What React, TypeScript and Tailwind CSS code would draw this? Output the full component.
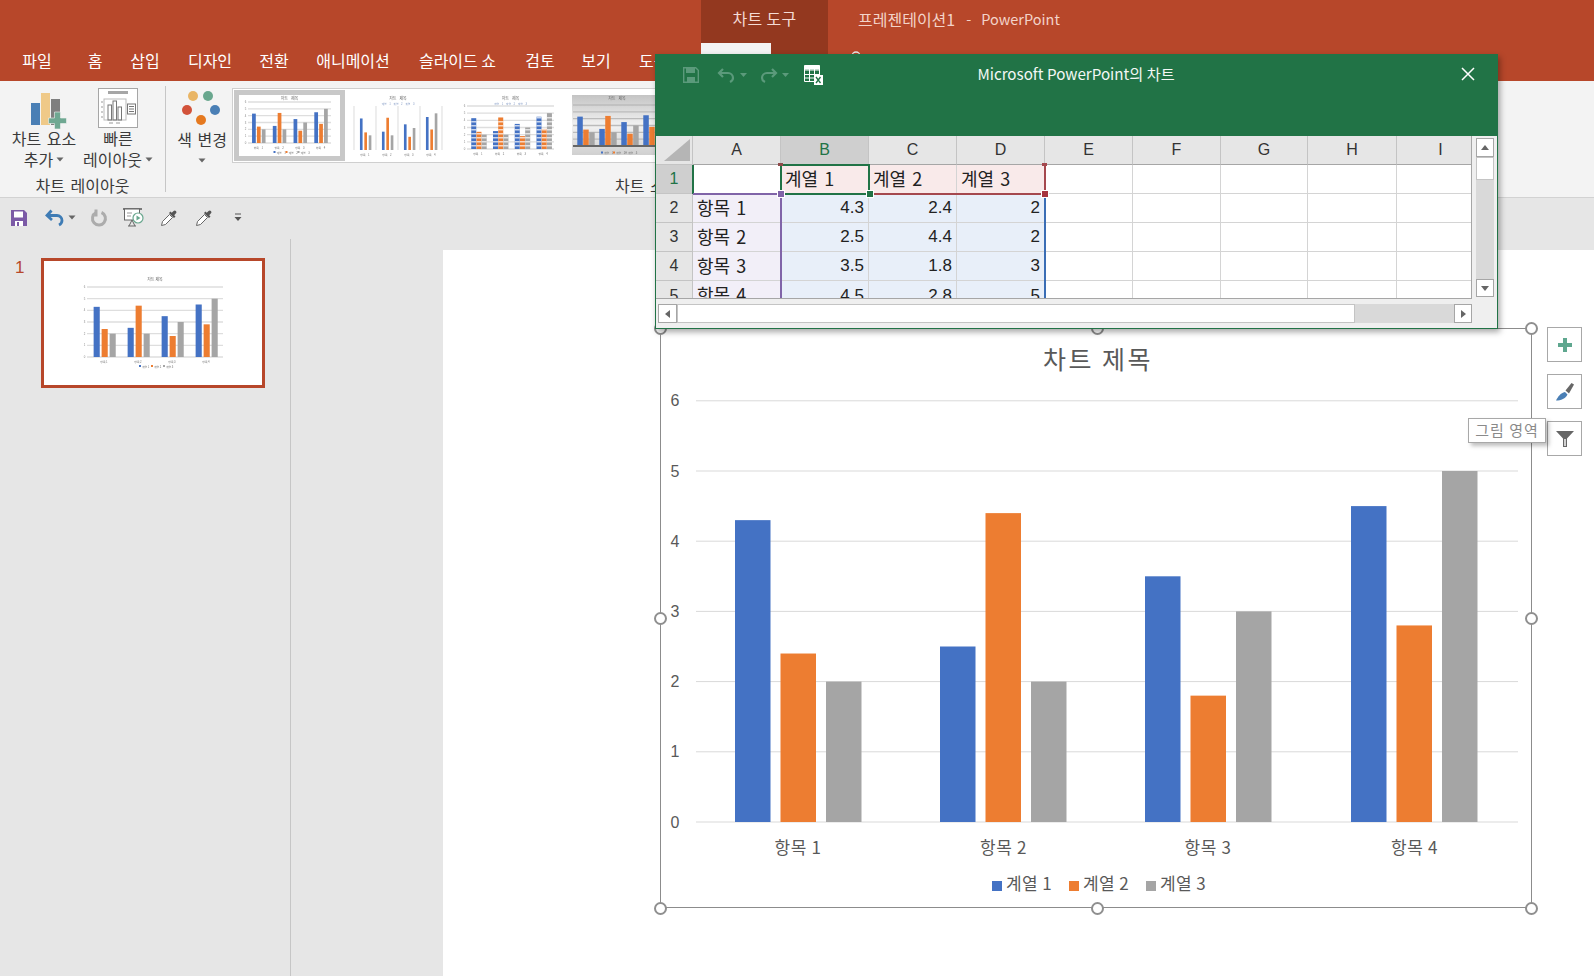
import React from 'react';

const FONT = '"Noto Sans CJK KR", "Liberation Sans", sans-serif';
const NUM = '"Liberation Sans", "Noto Sans CJK KR", sans-serif';

const series = [
  { color: '#4472c4', values: [4.3, 2.5, 3.5, 4.5] },
  { color: '#ed7d31', values: [2.4, 4.4, 1.8, 2.8] },
  { color: '#a5a5a5', values: [2, 2, 3, 5] },
];
const cats = ['항목 1', '항목 2', '항목 3', '항목 4'];

const tabs = [
  ['파일', 'w-[58px] text-center'],
  ['홈', 'w-[58px] text-center'],
  ['삽입', 'w-[42px] text-center'],
  ['디자인', 'w-[88px] text-center'],
  ['전환', 'w-[40px] text-center'],
  ['애니메이션', 'w-[118px] text-center'],
  ['슬라이드 쇼', 'w-[91px] text-center'],
  ['검토', 'w-[74px] text-center'],
  ['보기', 'w-[38px] text-center'],
  ['도움말', 'w-[40px] pl-[24px] text-left overflow-hidden'],
];

function Caret({ className = '' }: { className?: string }) {
  return (
    <svg width="8" height="5" viewBox="0 0 8 5" className={className}>
      <path d="M.5.5h7L4 4.500z" fill="#666" />
    </svg>
  );
}

const barShape = {
  plain: { bw: 0.18, step: 0.235, start: 0.195 },
  lines: { bw: 0.12, step: 0.2, start: 0.27 },
  striped: { bw: 0.23, step: 0.24, start: 0.195 },
  gray: { bw: 0.25, step: 0.27, start: 0.195 },
};

// 슬라이드 썸네일과 차트 스타일 갤러리의 작은 미리보기
function MiniChart({
  w,
  h,
  x0,
  x1,
  y0,
  y1,
  variant = 'plain',
}: {
  w: number;
  h: number;
  x0: number;
  x1: number;
  y0: number;
  y1: number;
  variant?: 'plain' | 'lines' | 'striped' | 'gray';
}) {
  const group = (x1 - x0) / 4;
  const unit = (y1 - y0) / 6;
  const shape = barShape[variant];
  const cx = (x0 + x1) / 2;
  const legendY = variant === 'gray' ? y1 + 5.5 : y1 + 8;
  return (
    <svg width={w} height={h} viewBox={`0 0 ${w} ${h}`} className="block blur-[0.6px]">
      <defs>
        <linearGradient id="grayBg" x1="0" y1="0" x2="0" y2="1">
          <stop offset="0" stopColor="#c4c4c4" />
          <stop offset="0.5" stopColor="#f2f2f2" />
          <stop offset="1" stopColor="#d0d0d0" />
        </linearGradient>
      </defs>
      {variant === 'gray' && <rect width={w} height={h} fill="url(#grayBg)" />}
      <text x={cx} y={Math.max(4.5, y0 - 6)} fontSize="4" textAnchor="middle" fill="#666" fontFamily={FONT}>
        차트 제목
      </text>
      {(variant === 'lines' || variant === 'striped') && (
        <text x={cx} y={y0 - 1} fontSize="2.8" textAnchor="middle" fill="#8aa0c8" fontFamily={FONT}>
          계열 1 계열 2 계열 3
        </text>
      )}
      {variant !== 'lines' &&
        [0, 1, 2, 3, 4, 5, 6].map((i) => (
          <line key={i} x1={x0} x2={x1} y1={y1 - i * unit} y2={y1 - i * unit} stroke={variant === 'gray' ? '#bbb' : '#dedede'} strokeWidth="1.3" />
        ))}
      {variant === 'lines' &&
        [0, 1, 2, 3, 4].map((i) => <line key={i} x1={x0 + i * group} x2={x0 + i * group} y1={y0} y2={y1} stroke="#e2e2e2" strokeWidth="1.2" />)}
      {cats.map((c, g) => (
        <g key={c}>
          {series.map((s, i) => {
            const x = x0 + g * group + group * shape.start + i * group * shape.step;
            const bh = s.values[g] * unit;
            return (
              <g key={s.color}>
                <rect x={x} y={y1 - bh} width={group * shape.bw} height={bh} fill={s.color} />
                {variant === 'striped' &&
                  [1, 2, 3, 4, 5, 6, 7, 8, 9, 10].map((k) =>
                    k * 4 < bh ? <rect key={k} x={x} y={y1 - k * 4} width={group * shape.bw} height="1.5" fill="#fff" opacity="0.7" /> : null,
                  )}
              </g>
            );
          })}
          {variant === 'gray' ? null : (
            <text x={x0 + g * group + group / 2} y={y1 + 5.5} fontSize="2.8" textAnchor="middle" fill="#777" fontFamily={FONT}>
              {c}
            </text>
          )}
        </g>
      ))}
      {variant === 'gray' && <rect x={x0} y={y1 - 1} width={w} height="2" fill="#666" />}
      {(variant === 'plain' || variant === 'striped') &&
        [0, 1, 2, 3, 4, 5, 6].map((i) => (
          <text key={i} x={x0 - 2.5} y={y1 - i * unit + 1} fontSize="2.8" textAnchor="middle" fill="#888" fontFamily={NUM}>
            {i}
          </text>
        ))}
      {(variant === 'plain' || variant === 'gray') &&
        series.map((s, i) => (
          <g key={s.color}>
            <rect x={cx - 16 + i * 12} y={legendY} width="2" height="2" fill={s.color} />
            <text x={cx - 13 + i * 12} y={legendY + 2.5} fontSize="2.8" fill="#777" fontFamily={FONT}>
              계열 {i + 1}
            </text>
          </g>
        ))}
    </svg>
  );
}

function ChartElementIcon() {
  return (
    <svg width="36" height="40" viewBox="0 0 36 40">
      <rect x="0" y="14" width="9" height="22" fill="#4a7fb5" />
      <rect x="10" y="4" width="9" height="32" fill="#efc988" />
      <rect x="20" y="10" width="9" height="26" fill="#7f7f7f" />
      <path d="M23.5 23h6v6h6v5.500h-6v5.500h-6v-5.500h-6V29h6z" fill="#6fa892" stroke="#f3f3f3" strokeWidth="0.6" />
    </svg>
  );
}

function QuickLayoutIcon() {
  return (
    <svg width="40" height="40" viewBox="0 0 40 40">
      <rect x="0.5" y="0.5" width="39" height="39" fill="#fff" stroke="#a6a6a6" />
      <rect x="10" y="3" width="20" height="3" fill="#a6a6a6" />
      <rect x="6" y="11" width="22" height="21" fill="none" stroke="#bbb" />
      <rect x="10" y="17" width="3.5" height="15" fill="none" stroke="#777" />
      <rect x="15" y="13" width="3.5" height="19" fill="none" stroke="#777" />
      <rect x="20" y="19" width="3.5" height="13" fill="none" stroke="#777" />
      <rect x="29.5" y="16" width="8" height="10" fill="#fff" stroke="#777" />
      <path d="M31 18.5h5M31 21h5M31 23.5h5" stroke="#777" />
      <path d="M3 14h2M3 19h2M3 24h2M3 29h2M11 35h4M18 35h4" stroke="#999" />
    </svg>
  );
}

function ColorsIcon() {
  return (
    <svg width="40" height="36" viewBox="0 0 40 36">
      <circle cx="11" cy="6" r="5" fill="#e9b565" />
      <circle cx="26" cy="6" r="5" fill="#69a78e" />
      <circle cx="5" cy="20" r="5" fill="#d2523a" />
      <circle cx="33" cy="20" r="5" fill="#4a7fb5" />
      <circle cx="19" cy="30" r="5" fill="#e5791f" />
    </svg>
  );
}

function Dropper() {
  return (
    <svg width="18" height="18" viewBox="0 0 18 18">
      <path d="M1.500 16.500l1-4 7-7 3 3-7 7z" fill="#fff" stroke="#666" />
      <path d="M9 4l5 5 1.500-1.500-1.300-1.300 1.800-1.900a1.700 1.700 0 0 0-2.400-2.400l-1.900 1.800-1.200-1.200z" fill="#555" />
    </svg>
  );
}

function QuickAccess() {
  return (
    <div className="h-[41px] flex items-center relative pl-[11px] pb-[2px] shrink-0">
      <svg width="16" height="16" viewBox="0 0 16 16" className="mr-[18px]">
        <path d="M0 0h13l3 3v13H0z" fill="#7b5aa6" />
        <rect x="3" y="1.5" width="9" height="6" fill="#fff" />
        <rect x="4" y="11" width="8" height="5" fill="#fff" />
        <rect x="6" y="12" width="2" height="4" fill="#7b5aa6" />
      </svg>
      <svg width="20" height="18" viewBox="0 0 20 18" className="mr-[3px]">
        <path d="M6.500 1.500L2 6.500l5 4.500" fill="none" stroke="#3f7cb5" strokeWidth="2.800" />
        <path d="M3 6.500h9a5 5 0 0 1 5 5c0 2-1 3.500-3 4.500" fill="none" stroke="#3f7cb5" strokeWidth="2.800" />
      </svg>
      <Caret className="mr-[14px]" />
      <svg width="18" height="18" viewBox="0 0 18 18" className="mr-[15px]">
        <path d="M11.500 3.500a6.500 6.500 0 1 1-5.500.2" fill="none" stroke="#acacac" strokeWidth="3" />
        <path d="M4.500.5h3v7h-3z" fill="#acacac" />
      </svg>
      <svg width="21" height="20" viewBox="0 0 21 20" className="mr-[16px]">
        <path d="M0 1h19" stroke="#555" strokeWidth="1.500" />
        <rect x="1.500" y="1" width="15" height="11" fill="#fff" stroke="#666" />
        <path d="M9 12l-3 6M9 12l3 6M5 18h8" stroke="#666" />
        <path d="M4 5h5M4 8h4" stroke="#999" />
        <circle cx="15" cy="10" r="5" fill="#fff" stroke="#69a78e" strokeWidth="1.200" />
        <path d="M13.500 7.500l4 2.500-4 2.500z" fill="#69a78e" />
      </svg>
      <Dropper />
      <span className="w-[17px]" />
      <Dropper />
      <svg width="8" height="9" viewBox="0 0 8 9" className="ml-[21px]">
        <path d="M1 1h6" stroke="#555" />
        <path d="M.5 4h7L4 8z" fill="#555" />
      </svg>
    </div>
  );
}

function Ribbon() {
  return (
    <div className="h-[117px] bg-[#f3f3f3] border-b border-[#d2d2d2] flex text-[16px] [word-spacing:2px] text-[#3a3a3a] shrink-0">
      <div className="w-[165px] shrink-0 flex flex-col">
        <div className="flex h-[94px]">
          <div className="w-[88px] flex flex-col items-center pt-[8px]">
            <div className="h-[40px] pl-[9px]">
              <ChartElementIcon />
            </div>
            <span className="mt-[-1px] leading-[21px] whitespace-nowrap">차트 요소</span>
            <span className="leading-[21px] flex items-center gap-[3px]">
              추가 <Caret />
            </span>
          </div>
          <div className="w-[60px] flex flex-col items-center pt-[7px]">
            <QuickLayoutIcon />
            <span className="leading-[21px]">빠른</span>
            <span className="leading-[21px] flex items-center gap-[3px] whitespace-nowrap">
              레이아웃 <Caret />
            </span>
          </div>
        </div>
        <div className="text-center leading-[20px] whitespace-nowrap">차트 레이아웃</div>
      </div>
      <div className="w-px h-[106px] mt-[5px] bg-[#c6c6c6]" />
      <div className="w-[66px] pl-[6px] flex flex-col items-center pt-[9px] shrink-0">
        <ColorsIcon />
        <span className="mt-[3px] leading-[21px] whitespace-nowrap">색 변경</span>
        <Caret className="mt-[8px]" />
      </div>
      <div className="flex flex-col">
        <div className="mt-[7px] h-[75px] w-[520px] border border-[#cfcfcf] bg-white flex overflow-hidden">
          <div className="w-[111px] h-[71px] mt-px ml-px bg-[#c8c8c8] p-[5px] shrink-0">
            <div className="bg-white">
              <MiniChart w={101} h={61} x0={9} x1={92} y0={7} y1={48} />
            </div>
          </div>
          <div className="ml-[5px] shrink-0">
            <MiniChart w={105} h={72} x0={4} x1={92} y0={17} y1={61} variant="lines" />
          </div>
          <div className="ml-[7px] shrink-0">
            <MiniChart w={105} h={72} x0={5} x1={92} y0={17} y1={60} variant="striped" />
          </div>
          <div className="ml-[5px] mt-[6px] shrink-0">
            <MiniChart w={100} h={60} x0={1} x1={89} y0={10} y1={51} variant="gray" />
          </div>
        </div>
        <div className="pl-[383px] leading-[20px] mt-[12px] whitespace-nowrap">차트 스타일</div>
      </div>
    </div>
  );
}

function BigChart() {
  const y0 = 493;
  const unit = 70.2;
  const groups = [74, 279, 484, 690];
  const centers = [137, 342.5, 547, 753.5];
  return (
    <svg width="872" height="579" viewBox="0 0 872 579" className="block absolute left-0 top-0 overflow-visible">
      <text x="437" y="40" textAnchor="middle" fontSize="25" letterSpacing="2.5" fill="#595959" fontFamily={FONT}>
        차트 제목
      </text>
      {[0, 1, 2, 3, 4, 5, 6].map((i) => (
        <g key={i}>
          <line x1="35" x2="857" y1={y0 - i * unit} y2={y0 - i * unit} stroke="#d9d9d9" strokeWidth="1" />
          <text x="14" y={y0 - i * unit + 5.5} textAnchor="middle" fontSize="16" fill="#595959" fontFamily={NUM}>
            {i}
          </text>
        </g>
      ))}
      {groups.map((gx, g) => (
        <g key={gx}>
          {series.map((s, i) => (
            <rect key={s.color} x={gx + i * 45.5} y={y0 - s.values[g] * unit} width="35.5" height={s.values[g] * unit} fill={s.color} />
          ))}
          <text x={centers[g]} y="525" textAnchor="middle" fontSize="17" letterSpacing="0.6" fill="#595959" fontFamily={FONT}>
            {cats[g]}
          </text>
        </g>
      ))}
      {series.map((s, i) => (
        <g key={s.color}>
          <rect x={331 + i * 77} y="552" width="10" height="10" fill={s.color} />
          <text x={345 + i * 77} y="561" fontSize="17" letterSpacing="0.4" fill="#595959" fontFamily={FONT}>
            계열 {i + 1}
          </text>
        </g>
      ))}
    </svg>
  );
}

function Handle({ className }: { className: string }) {
  return <div className={`absolute w-[13px] h-[13px] rounded-full bg-white border-2 border-[#8f8f8f] ${className}`} />;
}

function SideButton({ children }: { children: React.ReactNode }) {
  return <div className="w-[35px] h-[35px] bg-white border border-[#a8a8a8] flex items-center justify-center">{children}</div>;
}

function Slide() {
  return (
    <div className="relative flex-1 bg-white overflow-hidden">
      {/* chart frame on the slide canvas */}
      <div className="absolute left-[217px] top-[78px] w-[872px] h-[580px] border border-[#8c8c8c]">
        <BigChart />
        <Handle className="left-[-7px] top-[-7px]" />
        <Handle className="left-[430px] top-[-7px]" />
        <Handle className="left-[864px] top-[-7px]" />
        <Handle className="left-[-7px] top-[283px]" />
        <Handle className="left-[864px] top-[283px]" />
        <Handle className="left-[-7px] top-[573px]" />
        <Handle className="left-[430px] top-[573px]" />
        <Handle className="left-[864px] top-[573px]" />
      </div>
      <div className="absolute left-[1104px] top-[77px] flex flex-col gap-[12px]">
        <SideButton>
          <svg width="14" height="14" viewBox="0 0 14 14">
            <path d="M5 0h4v5h5v4H9v5H5V9H0V5h5z" fill="#5fa78f" />
          </svg>
        </SideButton>
        <SideButton>
          <svg width="18" height="18" viewBox="0 0 18 18">
            <path d="M9.500 7.500L15.500 0l2.500 1.500-5 9z" fill="#666" />
            <path d="M0 17.500C2 13.500 4.500 10 9 9l2.500 2.500C9.500 15.500 5 17.500 0 17.500z" fill="#4a7fb5" />
          </svg>
        </SideButton>
        <SideButton>
          <svg width="18" height="16" viewBox="0 0 18 16">
            <path d="M0 0h18l-7 7.500V16H7V7.500z" fill="#666" />
            <path d="M8.300 8v7h1.400V8z" fill="#fff" />
          </svg>
        </SideButton>
      </div>
      <div className="absolute left-[1025px] top-[168px] w-[78px] h-[25px] bg-white border border-[#a8a8a8] shadow-[3px_3px_4px_rgba(0,0,0,0.25)] flex items-center justify-center text-[15px] tracking-[1px] text-[#8a8a8a] whitespace-nowrap">
        그림 영역
      </div>
    </div>
  );
}

const cols = ['A', 'B', 'C', 'D', 'E', 'F', 'G', 'H', 'I'];
const rows = [
  ['', '계열 1', '계열 2', '계열 3'],
  ['항목 1', '4.3', '2.4', '2'],
  ['항목 2', '2.5', '4.4', '2'],
  ['항목 3', '3.5', '1.8', '3'],
  ['항목 4', '4.5', '2.8', '5'],
];

function cellBg(r: number, c: number) {
  if (r === 0 && c >= 1 && c <= 3) return 'bg-[#f9eaea]';
  if (r > 0 && c === 0) return 'bg-[#f2eff8]';
  if (r > 0 && c >= 1 && c <= 3) return 'bg-[#e8eff9]';
  return 'bg-white';
}

function Sheet() {
  return (
    <div className="relative w-[816px] h-[163px] overflow-hidden border-b border-[#a6a6a6] border-r shrink-0">
      <div className="grid grid-cols-[37px_88px_88px_88px_88px_88px_88px_87px_89px_88px] grid-rows-[29px_29px_29px_29px_29px]">
        <div className="bg-[#e6e6e6] border-b border-r border-[#c4c4c4] relative flex items-end justify-end p-[2px]">
          <svg width="26" height="22" viewBox="0 0 26 22" className="mb-[1px]">
            <path d="M26 0v22H0z" fill="#b5b5b5" />
          </svg>
        </div>
        {cols.map((c) => (
          <div
            key={c}
            className={`border-b border-r border-b-[#a6a6a6] border-r-[#c4c4c4] flex items-center justify-center text-[16px] ${
              c === 'B' ? 'bg-[#cfcfcf] text-[#217346]' : 'bg-[#e6e6e6] text-[#333]'
            }`}
            style={{ fontFamily: NUM }}
          >
            {c}
          </div>
        ))}
        {rows.map((row, r) => (
          <React.Fragment key={r}>
            <div
              className={`border-b border-r border-[#c4c4c4] flex items-center justify-center text-[16px] ${
                r === 0 ? 'bg-[#cfcfcf] text-[#217346]' : 'bg-[#e6e6e6] text-[#333]'
              }`}
              style={{ fontFamily: NUM }}
            >
              {r + 1}
            </div>
            {cols.map((_, c) => {
              const isNum = r > 0 && c > 0;
              return (
                <div
                  key={c}
                  className={`border-b border-r border-[#d4d4d4] flex items-center text-[#222] px-[4px] whitespace-nowrap ${cellBg(r, c)} ${
                    isNum ? 'justify-end text-[17px]' : 'text-[18px] [word-spacing:2px] pb-[2px]'
                  }`}
                  style={isNum ? { fontFamily: NUM } : undefined}
                >
                  {row[c] ?? ''}
                </div>
              );
            })}
          </React.Fragment>
        ))}
      </div>
      {/* chart data range outlines */}
      <div className="absolute left-[36px] top-[29px] w-[2px] h-[29px] bg-[#217346]" />
      <div className="absolute left-[37px] top-[57px] w-[88px] h-[2px] bg-[#8064a8]" />
      <div className="absolute left-[124px] top-[58px] w-[2px] h-[105px] bg-[#8064a8]" />
      <div className="absolute left-[213px] top-[57px] w-[176px] h-[2px] bg-[#a5484e]" />
      <div className="absolute left-[388px] top-[29px] w-[2px] h-[30px] bg-[#a5484e]" />
      <div className="absolute left-[388px] top-[59px] w-[2px] h-[104px] bg-[#3a6db5]" />
      <div className="absolute left-[124px] top-[28px] w-[90px] h-[31px] border-2 border-[#217346]" />
      <div className="absolute left-[122px] top-[55px] w-[6px] h-[6px] bg-[#8064a8] outline outline-white" />
      <div className="absolute left-[211px] top-[55px] w-[6px] h-[6px] bg-[#217346] outline outline-white" />
      <div className="absolute left-[386px] top-[55px] w-[6px] h-[6px] bg-[#a5343e] outline outline-white" />
      <div className="absolute left-[122px] top-[27px] w-[5px] h-[3px] bg-[#8f4a4a]" />
      <div className="absolute left-[386px] top-[27px] w-[5px] h-[3px] bg-[#a5484e]" />
    </div>
  );
}

function ScrollArrow({ dir }: { dir: 'up' | 'down' | 'left' | 'right' }) {
  const d = { up: 'M5 1l4 5H1z', down: 'M5 7L1 2h8z', left: 'M2 4l5-4v8z', right: 'M8 4L3 0v8z' }[dir];
  return (
    <svg width="10" height="8" viewBox="0 0 10 8">
      <path d={d} fill="#666" />
    </svg>
  );
}

function ExcelWindow() {
  return (
    <div className="absolute left-[655px] top-[54px] w-[843px] h-[275px] bg-[#efefef] border border-[#217346] shadow-[2px_3px_6px_rgba(0,0,0,0.35)] flex flex-col z-10">
      <div className="h-[81px] bg-[#217346] shrink-0 relative flex items-start pt-[9px] pl-[27px]">
        <div className="flex items-center h-[22px]">
          <svg width="16" height="16" viewBox="0 0 16 16" className="mr-[18px]">
            <path d="M.7.7h12l2.600 2.600v12H.7z" fill="none" stroke="#5b9a7b" strokeWidth="1.400" />
            <rect x="3" y="1" width="9" height="5" fill="#5b9a7b" />
            <rect x="4" y="10" width="8" height="5" fill="#5b9a7b" />
          </svg>
          <svg width="19" height="17" viewBox="0 0 19 17" className="mr-[4px]">
            <path d="M6 2L2 6l4 4M3 6h8a5 5 0 0 1 5 5c0 2-1 3-3 4" fill="none" stroke="#5b9a7b" strokeWidth="2.200" />
          </svg>
          <svg width="7" height="4" viewBox="0 0 7 4" className="mr-[12px]">
            <path d="M0 0h7L3.500 4z" fill="#5b9a7b" />
          </svg>
          <svg width="19" height="17" viewBox="0 0 19 17" className="mr-[4px]">
            <path d="M13 2l4 4-4 4M16 6H8a5 5 0 0 0-5 5c0 2 1 3 3 4" fill="none" stroke="#5b9a7b" strokeWidth="2.200" />
          </svg>
          <svg width="7" height="4" viewBox="0 0 7 4" className="mr-[15px]">
            <path d="M0 0h7L3.500 4z" fill="#5b9a7b" />
          </svg>
          <svg width="20" height="20" viewBox="0 0 20 20">
            <path d="M.5.5h15v16h-15zM.5 5h15M.5 9.500h15M.5 13h15M5.500.5v16M10.500.5v16" fill="none" stroke="#fff" />
            <rect x=".5" y=".5" width="15" height="4" fill="#fff" />
            <rect x="10" y="10" width="9" height="10" fill="#fff" />
            <path d="M12 12l4.500 6M16.500 12L12 18" stroke="#217346" strokeWidth="1.300" />
          </svg>
        </div>
        <div className="absolute left-[265px] w-[310px] top-[7px] text-center text-[15.2px] text-[#f3f8f5] whitespace-nowrap">
          Microsoft PowerPoint의 차트
        </div>
        <svg width="14" height="14" viewBox="0 0 14 14" className="absolute left-[805px] top-[12px]">
          <path d="M1 1l12 12M13 1L1 13" stroke="#fff" strokeWidth="1.500" />
        </svg>
      </div>
      <div className="flex">
        <Sheet />
        <div className="ml-[4px] mt-[2px] w-[18px] h-[159px] bg-[#d9d9d9] flex flex-col">
          <div className="h-[19px] bg-white border border-[#a6a6a6] flex items-center justify-center">
            <ScrollArrow dir="up" />
          </div>
          <div className="h-[23px] bg-white border border-[#c4c4c4]" />
          <div className="flex-1" />
          <div className="h-[18px] bg-white border border-[#a6a6a6] flex items-center justify-center">
            <ScrollArrow dir="down" />
          </div>
        </div>
      </div>
      <div className="ml-[2px] mt-[5px] w-[814px] h-[19px] bg-[#d9d9d9] flex">
        <div className="w-[19px] bg-white border border-[#a6a6a6] flex items-center justify-center">
          <ScrollArrow dir="left" />
        </div>
        <div className="w-[678px] bg-white border border-[#c4c4c4]" />
        <div className="flex-1" />
        <div className="w-[18px] bg-white border border-[#a6a6a6] flex items-center justify-center">
          <ScrollArrow dir="right" />
        </div>
      </div>
    </div>
  );
}

export default function App() {
  return (
    <div className="relative w-[1594px] h-[976px] overflow-hidden bg-[#e6e6e6] flex flex-col" style={{ fontFamily: FONT }}>
      {/* 타이틀 + 탭 */}
      <div className="h-[81px] bg-[#b7472a] shrink-0 relative flex flex-col">
        <div className="absolute left-[701px] top-0 w-[127px] h-[81px] bg-[#93381f] text-center text-[#f5dcd5] text-[16px] tracking-[0.3px] pt-[6px]">
          차트 도구
        </div>
        <div className="absolute left-[858px] top-[7px] flex items-center text-[#f3d3c9] whitespace-nowrap leading-[24px]">
          <span className="text-[16px]">프레젠테이션1</span>
          <span className="text-[14.5px] ml-[11px]">-</span>
          <span className="text-[14.5px] ml-[10px]">PowerPoint</span>
        </div>
        <svg width="12" height="12" viewBox="0 0 12 12" className="absolute left-[850px] top-[50px]">
          <circle cx="6" cy="6" r="4" fill="none" stroke="#e8e8e8" strokeWidth="1.400" />
        </svg>
        <div className="relative mt-[43px] h-[38px] flex pl-[8px] text-[16px] text-white">
          {tabs.map(([label, w]) => (
            <div key={label} className={`${w} whitespace-nowrap leading-[35px] shrink-0`}>
              {label}
            </div>
          ))}
          <div className="w-[46px] shrink-0" />
          <div className="w-[70px] bg-[#f3f3f3] shrink-0" />
        </div>
      </div>
      <Ribbon />
      <QuickAccess />
      <div className="flex flex-1 min-h-0">
        <div className="w-[291px] shrink-0 border-r border-[#c6c6c6] flex items-start pt-[19px] pl-[15px]">
          <span className="text-[17px] text-[#b7472a] w-[26px] leading-[20px]" style={{ fontFamily: NUM }}>
            1
          </span>
          <div className="w-[224px] h-[130px] border-[3px] border-[#b7472a] bg-white">
            <MiniChart w={218} h={124} x0={43} x1={179} y0={26} y1={96} />
          </div>
        </div>
        <div className="flex-1 flex flex-col pt-[11px] pl-[152px]">
          <Slide />
        </div>
      </div>
      <ExcelWindow />
    </div>
  );
}
